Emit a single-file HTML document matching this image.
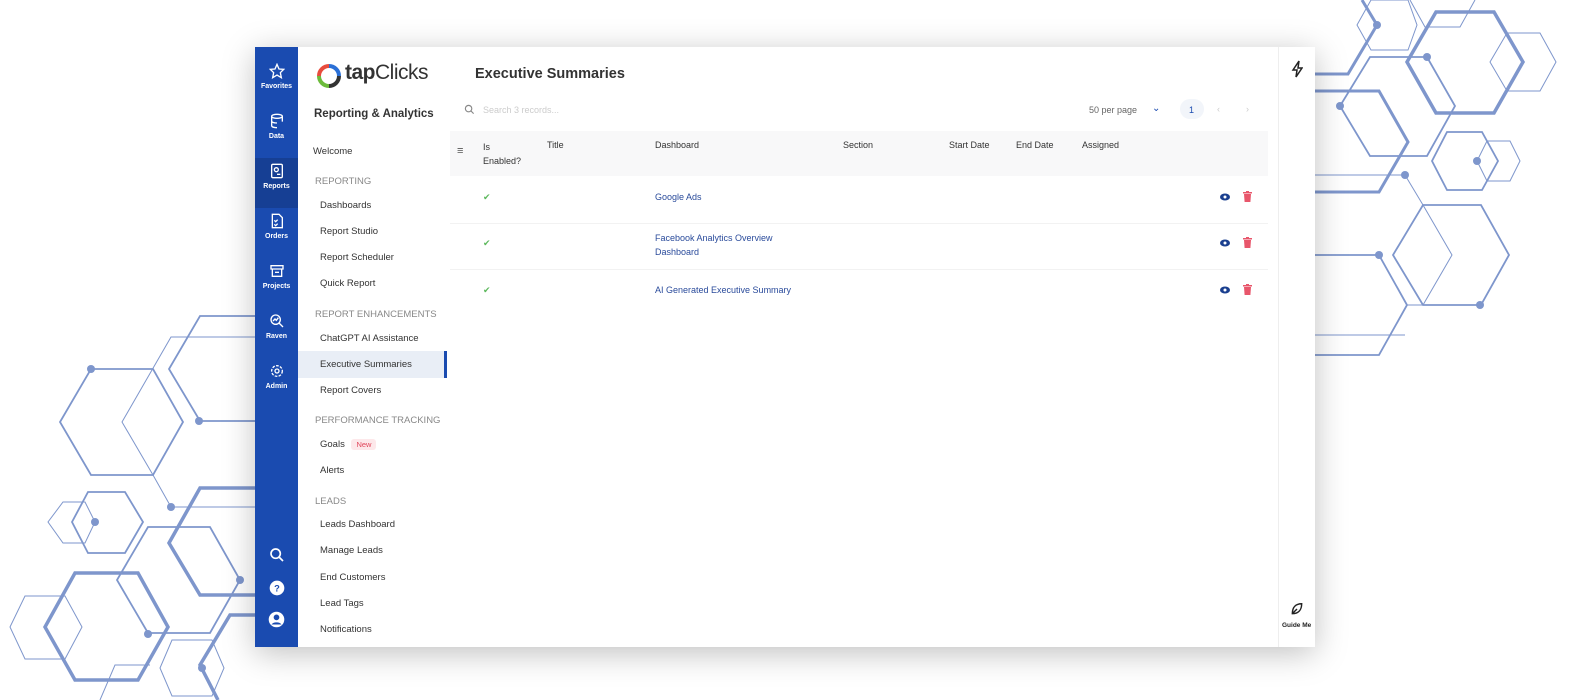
<!DOCTYPE html>
<html><head><style>
*{margin:0;padding:0;box-sizing:border-box}
body{width:1575px;height:700px;background:#fff;position:relative;overflow:hidden;font-family:"Liberation Sans",sans-serif}
svg.bg{position:absolute;left:0;top:0}
.win{position:absolute;left:255px;top:47px;width:1060px;height:600px;background:#fff;box-shadow:0 6px 30px rgba(0,0,0,.25)}
.rail{position:absolute;left:0;top:0;width:43px;height:600px;background:#1a4bb0}
.ri{position:absolute;left:0;width:43px;text-align:center;color:#fff;font-size:7px;font-weight:bold}
.ri svg{display:block;margin:0 auto 4px}
.nav{position:absolute;left:43px;top:0;width:149px;height:600px;background:#fff;font-size:9.5px;color:#333}
.nav div{position:absolute;left:22px}
.nav .h{left:17px;color:#888;font-size:9.5px}
.main{position:absolute;left:195px;top:0;width:828px;height:600px}
.t{position:absolute;font-size:9px;color:#333}
.link{color:#2a4b9b}
</style></head><body>
<svg class="bg" width="1575" height="700" fill="none" stroke="#7e96cc" stroke-width="1.3">
<!-- right -->
<polygon stroke-width="3.5" points="1436,12 1494,12 1523,62 1494,113 1436,113 1407,62"/>
<polygon stroke-width="1" points="1507,33 1540,33 1556,62 1540,91 1507,91 1490,62"/>
<polygon stroke-width="1.8" points="1370,57 1427,57 1455,106 1427,156 1370,156 1340,106"/>
<polyline stroke-width="3" points="1315,74 1348,74 1377,25 1362,0"/>
<polyline stroke-width="3" points="1315,91 1379,91 1408,142 1379,192 1315,192"/>
<polyline stroke-width="1" points="1315,175 1405,175 1423,205"/>
<polygon stroke-width="1.8" points="1447,132 1482,132 1498,161 1482,190 1447,190 1432,161"/>
<polygon stroke-width="1" points="1487,141 1510,141 1520,161 1510,181 1487,181 1477,161"/>
<polygon stroke-width="1.8" points="1423,205 1481,205 1509,255 1481,305 1423,305 1393,255"/>
<polyline stroke-width="1" points="1423,205 1452,255 1423,305 1407,305"/>
<polyline stroke-width="1.8" points="1315,255 1379,255 1407,305 1379,355 1315,355"/>
<polyline stroke-width="1" points="1315,335 1405,335"/>
<polygon stroke-width="1" points="1357,25 1371,0 1408,0 1417,25 1408,50 1371,50"/>
<polyline stroke-width="1" points="1410,0 1425,27 1460,27 1475,0"/>
<g fill="#7e96cc" stroke="none"><circle cx="1377" cy="25" r="4"/><circle cx="1427" cy="57" r="4"/><circle cx="1340" cy="106" r="4"/><circle cx="1405" cy="175" r="4"/><circle cx="1477" cy="161" r="4"/><circle cx="1480" cy="305" r="4"/><circle cx="1379" cy="255" r="4"/></g>
<!-- left -->
<polygon stroke-width="1.8" points="91,369 153,369 183,422 153,475 91,475 60,422"/>
<polyline stroke-width="1" points="255,337 171,337 122,422 153,475 171,507"/>
<polyline stroke-width="1.8" points="255,316 200,316 169,369 200,421 255,421"/>
<polygon stroke-width="1.8" points="88,492 125,492 143,522 125,553 88,553 72,522"/>
<polygon stroke-width="1" points="63,502 85,502 95,522 85,543 63,543 48,522"/>
<polygon stroke-width="3.5" points="75,573 138,573 168,627 138,680 75,680 45,627"/>
<polygon stroke-width="1" points="25,596 65,596 82,627 65,659 25,659 10,627"/>
<polygon stroke-width="1.8" points="148,527 210,527 240,580 210,633 148,633 117,580"/>
<polyline stroke-width="3.5" points="255,488 200,488 169,543 200,595 255,595"/>
<polyline stroke-width="1" points="171,507 255,507"/>
<polyline stroke-width="3.5" points="255,615 230,615 200,665 218,700"/>
<polygon stroke-width="1" points="172,640 212,640 224,668 212,696 172,696 160,668"/>
<polyline stroke-width="1" points="100,700 115,665 150,665"/>
<g fill="#7e96cc" stroke="none"><circle cx="91" cy="369" r="4"/><circle cx="199" cy="421" r="4"/><circle cx="171" cy="507" r="4"/><circle cx="95" cy="522" r="4"/><circle cx="148" cy="634" r="4"/><circle cx="240" cy="580" r="4"/><circle cx="202" cy="668" r="4"/></g>
</svg>
<div class="win">
<div class="rail">
<div style="position:absolute;top:111px;width:43px;height:50px;background:#163f94"></div>
<div class="ri" style="top:16px"><svg width="16" height="16" viewBox="0 0 24 24" fill="none" stroke="#fff" stroke-width="2"><polygon points="12,2 15,9 22,9.5 17,14.5 18.5,22 12,18 5.5,22 7,14.5 2,9.5 9,9"/></svg>Favorites</div>
<div class="ri" style="top:66px"><svg width="16" height="16" viewBox="0 0 24 24" fill="none" stroke="#fff" stroke-width="2"><ellipse cx="12" cy="5" rx="8" ry="3"/><path d="M4 5v14c0 2 4 3 8 3M20 5v8M4 12c0 2 4 3 8 3"/></svg>Data</div>
<div class="ri" style="top:116px"><svg width="16" height="16" viewBox="0 0 24 24" fill="none" stroke="#fff" stroke-width="2"><rect x="4" y="2" width="16" height="20" rx="2"/><circle cx="11" cy="10" r="3"/><path d="M12 17h5"/></svg>Reports</div>
<div class="ri" style="top:166px"><svg width="16" height="16" viewBox="0 0 24 24" fill="none" stroke="#fff" stroke-width="2"><path d="M5 2h10l5 5v15H5z"/><path d="M8 11l2 2 3-3M8 17l2 2 3-3"/></svg>Orders</div>
<div class="ri" style="top:216px"><svg width="16" height="16" viewBox="0 0 24 24" fill="none" stroke="#fff" stroke-width="2"><path d="M3 4h18v5H3zM5 9v11h14V9M9 14h6"/></svg>Projects</div>
<div class="ri" style="top:266px"><svg width="16" height="16" viewBox="0 0 24 24" fill="none" stroke="#fff" stroke-width="2"><circle cx="10" cy="10" r="7"/><path d="M15 15l6 6M6 12l3-3 2 2 3-4"/></svg>Raven</div>
<div class="ri" style="top:316px"><svg width="16" height="16" viewBox="0 0 24 24" fill="none" stroke="#fff" stroke-width="2"><circle cx="12" cy="12" r="3"/><circle cx="12" cy="12" r="8" stroke-dasharray="4 2"/></svg>Admin</div>
<div class="ri" style="top:500px"><svg width="16" height="16" viewBox="0 0 24 24" fill="none" stroke="#fff" stroke-width="2.5"><circle cx="10" cy="10" r="7"/><path d="M15 15l6 6"/></svg></div>
<div class="ri" style="top:533px"><svg width="16" height="16" viewBox="0 0 24 24"><circle cx="12" cy="12" r="11" fill="#fff"/><text x="12" y="17" font-size="14" font-weight="bold" text-anchor="middle" fill="#1a4bb0" font-family="Liberation Sans">?</text></svg></div>
<div class="ri" style="top:564px"><svg width="17" height="17" viewBox="0 0 24 24"><circle cx="12" cy="12" r="11" fill="#fff"/><circle cx="12" cy="9" r="4" fill="#1a4bb0"/><path d="M5 19c2-4 12-4 14 0" fill="#1a4bb0"/></svg></div>
</div>
<div class="nav">
<svg style="position:absolute;left:18px;top:16px" width="26" height="26" viewBox="0 0 26 26" fill="none" stroke-width="4"><path d="M13 3a10 10 0 0 1 10 10" stroke="#2a6fd6"/><path d="M23 13a10 10 0 0 1-10 10" stroke="#333"/><path d="M13 23a10 10 0 0 1-10-10" stroke="#6cbb3c"/><path d="M3 13a10 10 0 0 1 10-10" stroke="#e84c3d"/></svg>
<div style="left:47px;top:14px;font-size:21px;color:#333;letter-spacing:-.5px"><b>tap</b>Clicks</div>
<div style="left:16px;top:61px;font-size:11.5px;font-weight:bold;color:#333">Reporting &amp; Analytics</div>
<div style="left:15px;top:99px">Welcome</div>
<div class="h" style="top:129px">REPORTING</div>
<div style="top:153px">Dashboards</div>
<div style="top:179px">Report Studio</div>
<div style="top:205px">Report Scheduler</div>
<div style="top:231px">Quick Report</div>
<div class="h" style="top:262px">REPORT ENHANCEMENTS</div>
<div style="top:286px">ChatGPT AI Assistance</div>
<div style="left:0;top:304px;width:149px;height:27px;background:#e9eef6;border-right:3px solid #1a4bb0"></div>
<div style="top:312px">Executive Summaries</div>
<div style="top:338px">Report Covers</div>
<div class="h" style="top:368px">PERFORMANCE TRACKING</div>
<div style="top:392px">Goals <span style="background:#fde8ea;color:#e0455a;font-size:7.5px;padding:1px 5px;margin-left:4px;border-radius:3px">New</span></div>
<div style="top:418px">Alerts</div>
<div class="h" style="top:449px">LEADS</div>
<div style="top:472px">Leads Dashboard</div>
<div style="top:498px">Manage Leads</div>
<div style="top:525px">End Customers</div>
<div style="top:551px">Lead Tags</div>
<div style="top:577px">Notifications</div>
</div>
<div class="main">
<div class="t" style="left:25px;top:19px;font-size:14.5px;font-weight:bold;color:#333">Executive Summaries</div>
<svg style="position:absolute;left:14px;top:57px" width="11" height="11" viewBox="0 0 24 24" fill="none" stroke="#888" stroke-width="2.5"><circle cx="10" cy="10" r="7"/><path d="M15 15l6 6"/></svg>
<div class="t" style="left:33px;top:58px;color:#ccc">Search 3 records...</div>
<div class="t" style="left:639px;top:58px;color:#666">50 per page</div>
<div class="t" style="left:702px;top:56px;color:#1a4bb0;font-size:10px">⌄</div>
<div style="position:absolute;left:730px;top:52px;width:24px;height:20px;border-radius:10px;background:#f2f5fa"></div>
<div class="t" style="left:739px;top:58px;color:#1a4bb0">1</div>
<div class="t" style="left:767px;top:57px;color:#ccc">‹</div>
<div class="t" style="left:796px;top:57px;color:#ccc">›</div>
<div style="position:absolute;left:0;top:84px;width:818px;height:45px;background:#f8f8f9"></div>
<div class="t" style="left:7px;top:98px;color:#555;font-size:11px">≡</div>
<div class="t" style="left:33px;top:93px;line-height:14px">Is<br>Enabled?</div>
<div class="t" style="left:97px;top:93px">Title</div>
<div class="t" style="left:205px;top:93px">Dashboard</div>
<div class="t" style="left:393px;top:93px">Section</div>
<div class="t" style="left:499px;top:93px">Start Date</div>
<div class="t" style="left:566px;top:93px">End Date</div>
<div class="t" style="left:632px;top:93px">Assigned</div>
<div style="position:absolute;left:0;top:176px;width:818px;border-top:1px solid #f2f2f2"></div>
<div style="position:absolute;left:0;top:222px;width:818px;border-top:1px solid #f2f2f2"></div>
<div class="t" style="left:33px;top:145px;color:#5cb85c">✔</div>
<div class="t link" style="left:205px;top:145px">Google Ads</div>
<div class="t" style="left:33px;top:191px;color:#5cb85c">✔</div>
<div class="t link" style="left:205px;top:184px;line-height:14px">Facebook Analytics Overview<br>Dashboard</div>
<div class="t" style="left:33px;top:238px;color:#5cb85c">✔</div>
<div class="t link" style="left:205px;top:238px">AI Generated Executive Summary</div>
<svg style="position:absolute;left:770px;top:146px" width="10" height="8" viewBox="0 0 10 8"><ellipse cx="5" cy="4" rx="5" ry="3.5" fill="#1a3f8f"/><circle cx="5" cy="4" r="1.5" fill="#fff"/></svg>
<svg style="position:absolute;left:793px;top:144px" width="9" height="11" viewBox="0 0 9 11" fill="#e8566b"><rect x="0" y="1" width="9" height="1.5"/><rect x="3" y="0" width="3" height="1.5"/><path d="M1 3h7l-.6 8H1.6z"/></svg>
<svg style="position:absolute;left:770px;top:192px" width="10" height="8" viewBox="0 0 10 8"><ellipse cx="5" cy="4" rx="5" ry="3.5" fill="#1a3f8f"/><circle cx="5" cy="4" r="1.5" fill="#fff"/></svg>
<svg style="position:absolute;left:793px;top:190px" width="9" height="11" viewBox="0 0 9 11" fill="#e8566b"><rect x="0" y="1" width="9" height="1.5"/><rect x="3" y="0" width="3" height="1.5"/><path d="M1 3h7l-.6 8H1.6z"/></svg>
<svg style="position:absolute;left:770px;top:239px" width="10" height="8" viewBox="0 0 10 8"><ellipse cx="5" cy="4" rx="5" ry="3.5" fill="#1a3f8f"/><circle cx="5" cy="4" r="1.5" fill="#fff"/></svg>
<svg style="position:absolute;left:793px;top:237px" width="9" height="11" viewBox="0 0 9 11" fill="#e8566b"><rect x="0" y="1" width="9" height="1.5"/><rect x="3" y="0" width="3" height="1.5"/><path d="M1 3h7l-.6 8H1.6z"/></svg>
</div>
<div style="position:absolute;left:1023px;top:0;width:37px;height:600px;border-left:1px solid #eee"></div>
<svg style="position:absolute;left:1036px;top:13px" width="12" height="18" viewBox="0 0 12 18" fill="none" stroke="#222" stroke-width="1.5"><path d="M8 1L2 10h4l-1 7 6-9H7z"/></svg>
<svg style="position:absolute;left:1035px;top:555px" width="14" height="14" viewBox="0 0 24 24" fill="none" stroke="#222" stroke-width="2.5"><path d="M20 3C10 3 4 9 4 20c10 0 16-6 16-17zM4 20l8-8"/></svg>
<div style="position:absolute;left:1027px;top:575px;font-size:6.5px;font-weight:bold;color:#222">Guide Me</div>
</div>
</body></html>
